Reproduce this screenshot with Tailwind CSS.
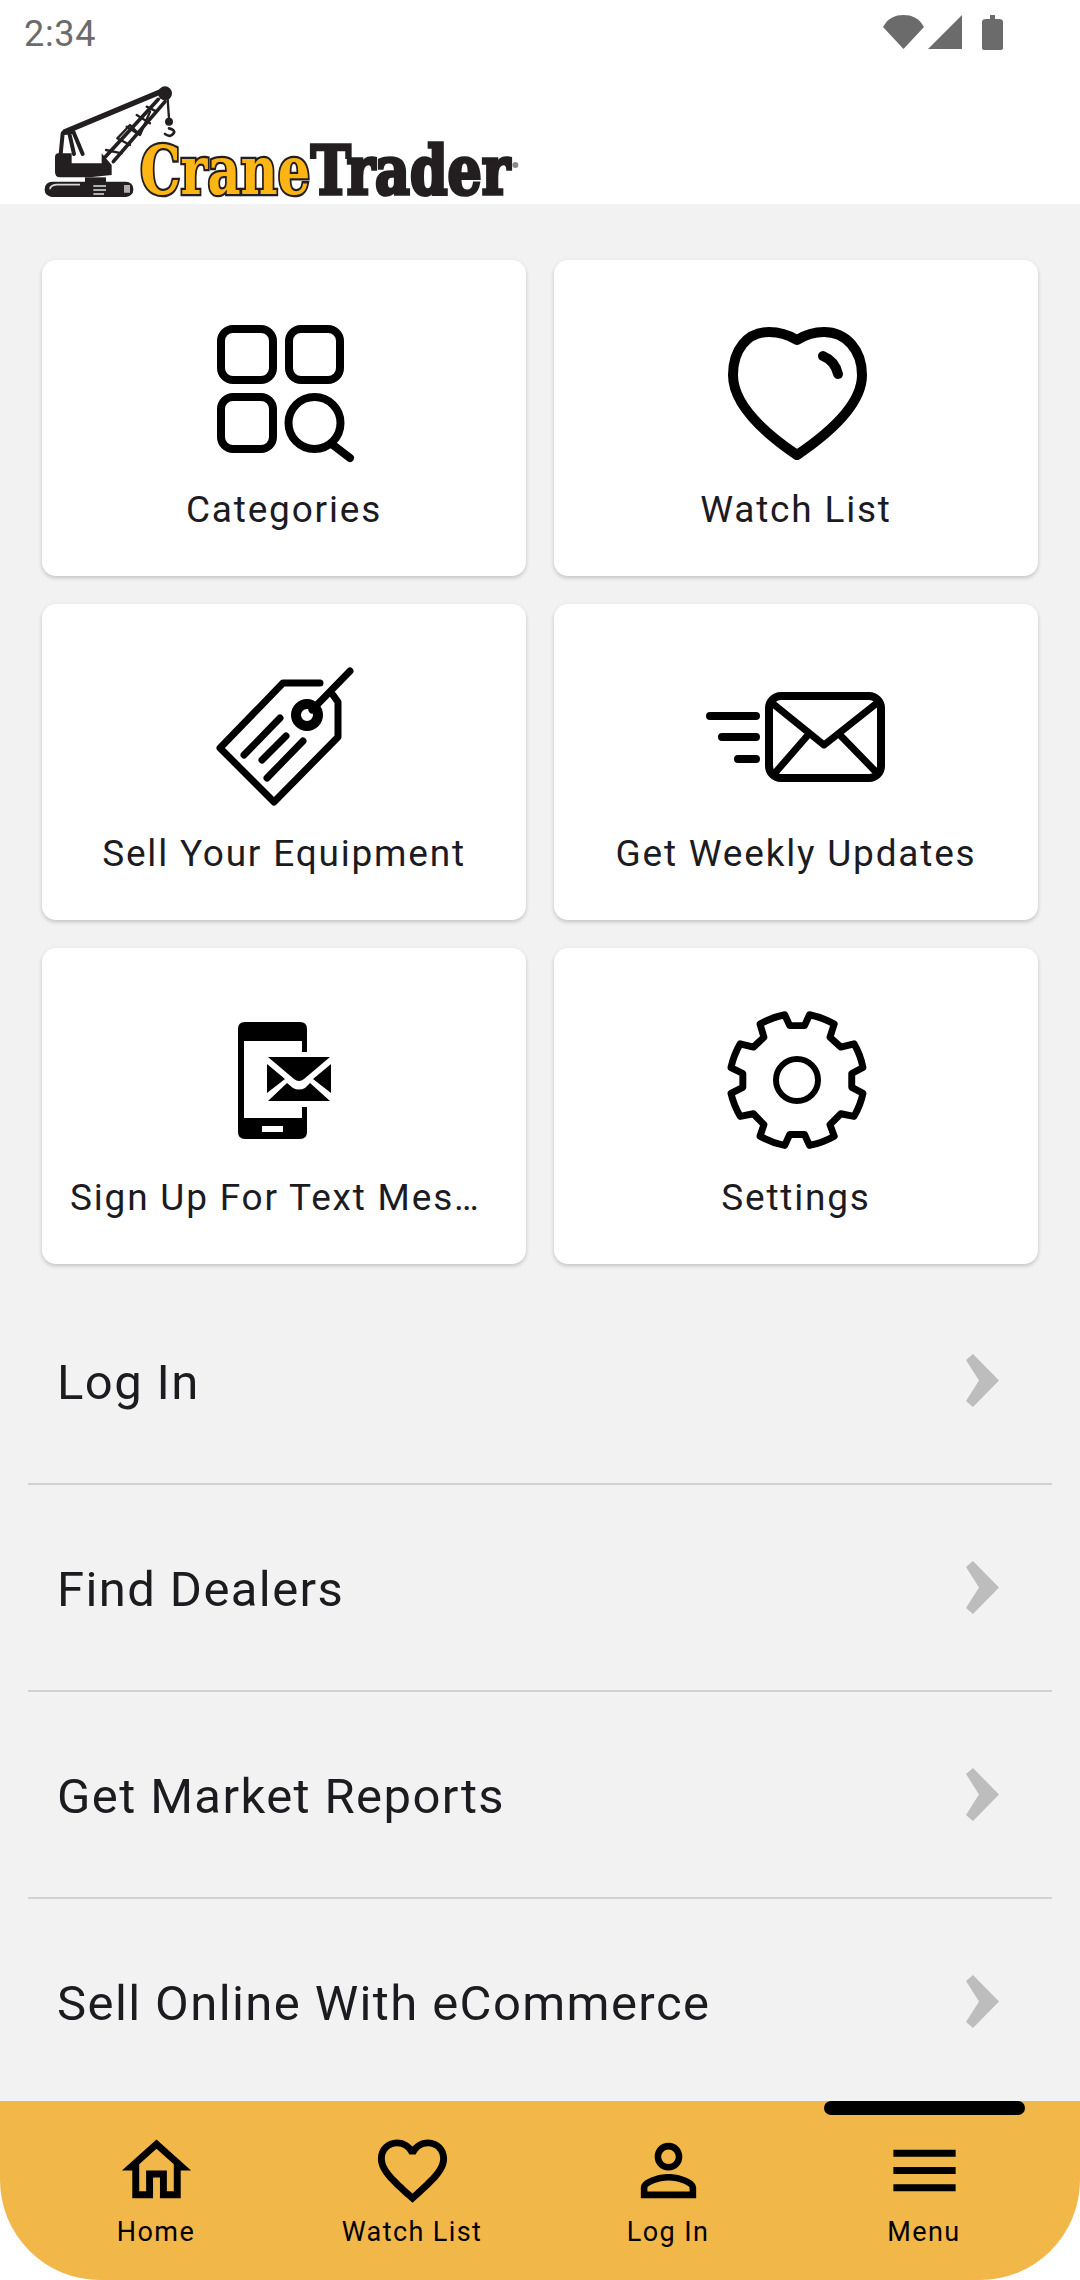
<!DOCTYPE html>
<html>
<head>
<meta charset="utf-8">
<script src="https://cdn.jsdelivr.net/npm/@tailwindcss/browser@4"></script>
</head>
<body class="bg-white">
<div class="w-[1080px] h-[2280px] flex flex-col overflow-hidden bg-white font-['Roboto',sans-serif]">
  <header class="h-[204px] shrink-0 bg-white flex flex-col">
    <div class="h-[70px] relative flex items-start justify-between">
      <span class="ml-[24px] mt-[13px] text-[36px] leading-[42px] tracking-[0.7px] text-[#6b6b6b]">2:34</span>
      <svg class="absolute left-[880px] top-[12px]" width="126" height="42" viewBox="0 0 126 42" fill="#6b6b6b">
        <path d="M3 15C8 6 15 3 23.500 3C32 3 39 6 44 15L23.500 37Z"/>
        <path d="M82 3V37H48Z"/>
        <path d="M106 7H110V3H115V7H119Q123 7 123 10V36Q123 38 120 38H105Q102 38 102 36V10Q102 7 106 7Z"/>
      </svg>
    </div>
    <svg class="ml-[30px]" width="520" height="134" viewBox="0 0 1560 402">
      <g fill="none" stroke="#231f20" stroke-linecap="round" stroke-linejoin="round">
        <path d="M105 185L392 65" stroke-width="16"/>
        <path d="M225 262L385 88M250 275L405 95" stroke-width="11"/>
        <path d="M228 240L275 250M262 205L300 225M290 170L330 195M320 135L360 160M350 110L380 125M262 205L300 165L330 195L360 125" stroke-width="7"/>
        <path d="M92 252L98 190L130 185L158 252M118 190L132 252" stroke-width="12"/>
        <path d="M412 75L417 145" stroke-width="7"/>
        <path d="M417 175Q437 180 431 190Q422 204 405 192" stroke-width="8"/>
      </g>
      <circle cx="405" cy="70" r="21" fill="#231f20"/>
      <circle cx="417" cy="155" r="12" fill="#231f20"/>
      <path d="M85 250H125V280H215V250L245 285V315L180 322H90Q75 322 75 305V262Q75 250 85 250Z" fill="#231f20"/>
      <path d="M165 322H228V338H165Z" fill="#231f20"/>
      <rect x="44" y="335" width="266" height="46" rx="22" fill="#231f20"/>
      <path d="M60 358Q60 346 80 344H150" fill="none" stroke="#d8d8d8" stroke-width="5"/>
      <path d="M190 345H228V351H190ZM190 357H228V363H190ZM190 369H222V375H190ZM282 345H300V368H282Z" fill="#b0b0b0"/>
      <text transform="translate(330 372) scale(0.756 1)" font-family="'DejaVu Serif',serif" font-weight="700" font-size="204" textLength="675" lengthAdjust="spacingAndGlyphs" fill="#fdb515" stroke="#231f20" stroke-width="14" paint-order="stroke">Crane</text>
      <text transform="translate(842 372) scale(0.78 1)" font-family="'DejaVu Serif',serif" font-weight="700" font-size="204" textLength="767" lengthAdjust="spacingAndGlyphs" fill="#231f20" stroke="#231f20" stroke-width="11">Trader</text>
      <circle cx="1456" cy="285" r="9" fill="#8a8a8a"/>
    </svg>
  </header>

  <main class="flex-1 min-h-0 overflow-hidden bg-[#f2f2f2] text-[#1c1b1f]">
    <div class="pt-[56px] px-[42px] grid grid-cols-2 gap-x-[28px] gap-y-[28px]">
      <div class="h-[316px] bg-white rounded-[14px] shadow-[0_2px_4px_rgba(0,0,0,0.2)] flex flex-col items-center pt-[50px] px-[28px]">
        <svg class="w-[150px] h-[150px] shrink-0 overflow-visible" viewBox="0 0 150 150" fill="none" stroke="#000" stroke-width="8" stroke-linecap="round">
          <rect x="12" y="19" width="52" height="51" rx="12"/>
          <rect x="80" y="19" width="51" height="51" rx="12"/>
          <rect x="12" y="87" width="52" height="52" rx="12"/>
          <circle cx="105.500" cy="113" r="26"/>
          <path d="M124 135L141 148"/>
        </svg>
        <div class="w-full mt-[26px] text-center truncate text-[37px] leading-[48px] tracking-[1.8px]">Categories</div>
      </div>
      <div class="h-[316px] bg-white rounded-[14px] shadow-[0_2px_4px_rgba(0,0,0,0.2)] flex flex-col items-center pt-[50px] px-[28px]">
        <svg class="w-[150px] h-[150px] shrink-0 overflow-visible" viewBox="0 0 150 150" fill="none" stroke="#000" stroke-width="10" stroke-linecap="round" stroke-linejoin="round">
          <path d="M76 30C66 24 58 22 48 22C26 22 12 40 12 65C12 95 45 124 76 145C107 124 141 95 141 65C141 40 125 22 103 22C93 22 84 25 76 30Z"/>
          <path d="M102 46Q114 51 117 64"/>
        </svg>
        <div class="w-full mt-[26px] text-center truncate text-[37px] leading-[48px] tracking-[1.8px]">Watch List</div>
      </div>
      <div class="h-[316px] bg-white rounded-[14px] shadow-[0_2px_4px_rgba(0,0,0,0.2)] flex flex-col items-center pt-[50px] px-[28px]">
        <svg class="w-[150px] h-[150px] shrink-0 overflow-visible" viewBox="0 0 150 150" fill="none" stroke="#000" stroke-width="7" stroke-linecap="round" stroke-linejoin="round">
          <path d="M111 29H74L11 94L65 148L129 83V48L124 41"/>
          <circle cx="98" cy="61" r="11" stroke-width="10"/>
          <path d="M103 56L141 17"/>
          <path d="M35 101L71 64M53 106L77 82M58 124L94 87"/>
        </svg>
        <div class="w-full mt-[26px] text-center truncate text-[37px] leading-[48px] tracking-[1.8px]">Sell Your Equipment</div>
      </div>
      <div class="h-[316px] bg-white rounded-[14px] shadow-[0_2px_4px_rgba(0,0,0,0.2)] flex flex-col items-center pt-[50px] px-[28px]">
        <svg class="w-[150px] h-[150px] shrink-0 overflow-visible" viewBox="0 0 150 150" fill="none" stroke="#000" stroke-width="8" stroke-linecap="round" stroke-linejoin="round">
          <rect x="48" y="42" width="112" height="82" rx="12"/>
          <path d="M51 49L103 91L156 49M54 119L87 81M119 81L156 119" stroke-width="7"/>
          <path d="M-11 62H35M1 83H35M17 105H35"/>
        </svg>
        <div class="w-full mt-[26px] text-center truncate text-[37px] leading-[48px] tracking-[1.8px]">Get Weekly Updates</div>
      </div>
      <div class="h-[316px] bg-white rounded-[14px] shadow-[0_2px_4px_rgba(0,0,0,0.2)] flex flex-col items-center pt-[50px] px-[28px]">
        <svg class="w-[150px] h-[150px] shrink-0 overflow-visible" viewBox="0 0 150 150">
          <path fill-rule="evenodd" d="M36 24H91Q98 24 98 31V134Q98 141 91 141H36Q29 141 29 134V31Q29 24 36 24ZM35 43V120H93V43ZM53 128V134H74V128Z" fill="#000"/>
          <rect x="92" y="54" width="7" height="55" fill="#fff"/>
          <path d="M59 59H121L95 81Q90 85 85 81ZM58 66L76 81L58 95ZM122 66L104 81L122 95ZM59 103L78 85L84 90Q90 93 96 90L101 85L121 103Z" fill="#000"/>
        </svg>
        <div class="w-full mt-[26px] pr-[16px] text-center truncate text-[37px] leading-[48px] tracking-[1.8px]">Sign Up For Text Messages</div>
      </div>
      <div class="h-[316px] bg-white rounded-[14px] shadow-[0_2px_4px_rgba(0,0,0,0.2)] flex flex-col items-center pt-[50px] px-[28px]">
        <svg class="w-[150px] h-[150px] shrink-0 overflow-visible" viewBox="0 0 150 150" fill="none" stroke="#000" stroke-width="6" stroke-linejoin="round">
          <path transform="translate(-10.500 -7) scale(0.3300)" stroke-width="21" d="M225 72L240 105H285L300 72Q340 80 375 100L362 140L395 170L435 160Q455 195 462 232L428 250V292L462 310Q455 345 435 380L395 372L362 405L375 440Q340 460 300 468L285 435H240L225 468Q185 460 150 440L162 405L130 372L90 380Q70 345 62 310L98 292V250L62 232Q70 195 90 160L130 170L162 140L150 100Q185 80 225 72Z"/>
          <circle cx="76" cy="82" r="21"/>
        </svg>
        <div class="w-full mt-[26px] text-center truncate text-[37px] leading-[48px] tracking-[1.8px]">Settings</div>
      </div>
    </div>

    <div class="mt-[14px] mx-[28px]">
      <div class="h-[207px] border-b-2 border-[#d2d2d2] flex items-center justify-between pl-[29px] pr-[53px] text-[49px] tracking-[1.4px]">
        <span class="mt-[4px]">Log In</span>
        <svg width="33" height="53" viewBox="0 0 33 53" fill="#bdbdbd"><path d="M0 6L7 0L33 26.500L7 53L0 47L13 26.500Z"/></svg>
      </div>
      <div class="h-[207px] border-b-2 border-[#d2d2d2] flex items-center justify-between pl-[29px] pr-[53px] text-[49px] tracking-[1.4px]">
        <span class="mt-[4px]">Find Dealers</span>
        <svg width="33" height="53" viewBox="0 0 33 53" fill="#bdbdbd"><path d="M0 6L7 0L33 26.500L7 53L0 47L13 26.500Z"/></svg>
      </div>
      <div class="h-[207px] border-b-2 border-[#d2d2d2] flex items-center justify-between pl-[29px] pr-[53px] text-[49px] tracking-[1.4px]">
        <span class="mt-[4px]">Get Market Reports</span>
        <svg width="33" height="53" viewBox="0 0 33 53" fill="#bdbdbd"><path d="M0 6L7 0L33 26.500L7 53L0 47L13 26.500Z"/></svg>
      </div>
      <div class="h-[207px] border-b-2 border-[#d2d2d2] flex items-center justify-between pl-[29px] pr-[53px] text-[49px] tracking-[1.4px]">
        <span class="mt-[4px]">Sell Online With eCommerce</span>
        <svg width="33" height="53" viewBox="0 0 33 53" fill="#bdbdbd"><path d="M0 6L7 0L33 26.500L7 53L0 47L13 26.500Z"/></svg>
      </div>
    </div>
  </main>

  <nav class="h-[179px] shrink-0 bg-[#f2b749] rounded-b-[100px] grid grid-cols-4 px-[28px] text-black">
    <div class="flex flex-col items-center pt-[28px]">
      <svg width="83" height="83" viewBox="0 0 24 24" fill="#000"><path d="M12 5.690l5 4.500V18h-2v-6H9v6H7v-7.810l5-4.500M12 3L2 12h3v8h6v-6h2v6h6v-8h3L12 3z"/></svg>
      <span class="mt-[4px] text-[27px] leading-[32px] tracking-[1.4px]">Home</span>
    </div>
    <div class="flex flex-col items-center pt-[28px]">
      <svg width="83" height="83" viewBox="0 0 24 24" fill="#000"><path d="M16.500 3c-1.740 0-3.410.81-4.500 2.090C10.910 3.810 9.240 3 7.500 3 4.420 3 2 5.420 2 8.500c0 3.780 3.400 6.860 8.550 11.540L12 21.350l1.450-1.320C18.600 15.360 22 12.280 22 8.500 22 5.420 19.580 3 16.500 3zm-4.400 15.550l-.1.100-.1-.100C7.140 14.240 4 11.390 4 8.500 4 6.500 5.500 5 7.500 5c1.540 0 3.040.99 3.570 2.360h1.870C13.460 5.990 14.960 5 16.500 5c2 0 3.500 1.500 3.500 3.500 0 2.890-3.140 5.740-7.900 10.050z"/></svg>
      <span class="mt-[4px] text-[27px] leading-[32px] tracking-[1.4px]">Watch List</span>
    </div>
    <div class="flex flex-col items-center pt-[28px]">
      <svg width="83" height="83" viewBox="0 0 24 24" fill="#000"><path d="M12 5.900c1.160 0 2.100.94 2.100 2.100s-.94 2.100-2.100 2.100S9.900 9.160 9.900 8s.94-2.100 2.100-2.100m0 9c2.970 0 6.100 1.460 6.100 2.100v1.100H5.900V17c0-.64 3.130-2.100 6.100-2.100M12 4C9.790 4 8 5.790 8 8s1.790 4 4 4 4-1.790 4-4-1.790-4-4-4zm0 9c-2.670 0-8 1.340-8 4v3h16v-3c0-2.660-5.330-4-8-4z"/></svg>
      <span class="mt-[4px] text-[27px] leading-[32px] tracking-[1.4px]">Log In</span>
    </div>
    <div class="relative flex flex-col items-center pt-[28px]">
      <div class="absolute top-0 left-[28px] w-[201px] h-[14px] rounded-full bg-black"></div>
      <svg width="83" height="83" viewBox="0 0 24 24" fill="#000"><path d="M3 18h18v-2H3v2zm0-5h18v-2H3v2zm0-7v2h18V6H3z"/></svg>
      <span class="mt-[4px] text-[27px] leading-[32px] tracking-[1.4px]">Menu</span>
    </div>
  </nav>
</div>
</body>
</html>
